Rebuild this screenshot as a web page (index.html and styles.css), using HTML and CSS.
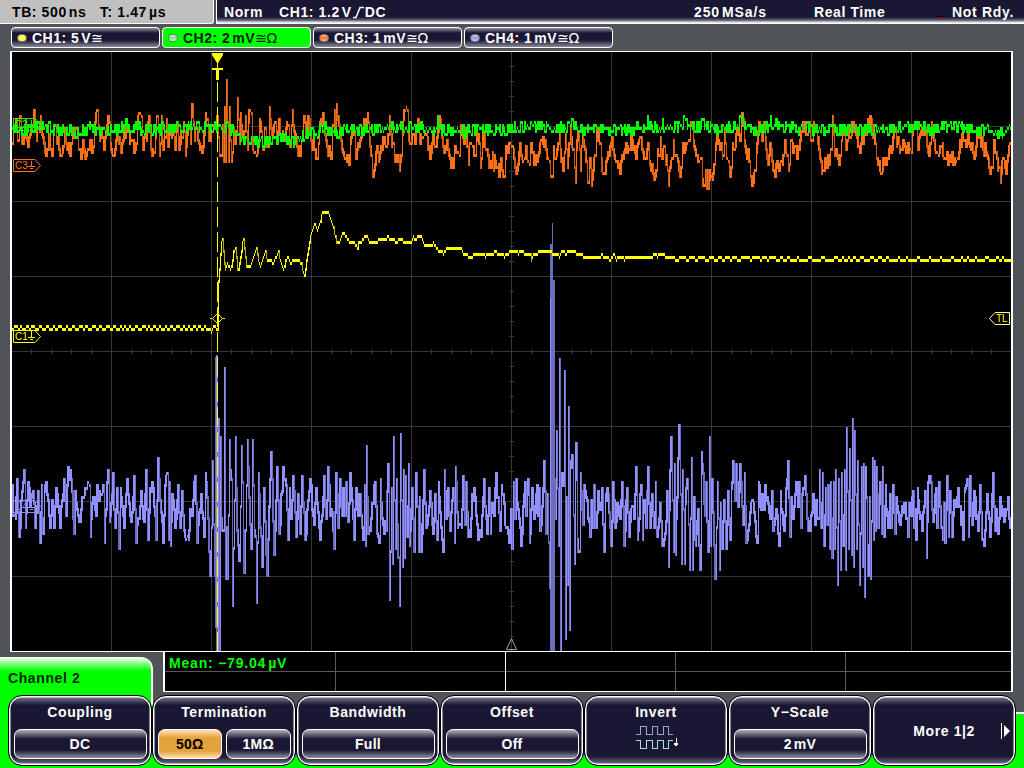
FILE: index.html
```html
<!DOCTYPE html>
<html lang="en">
<head>
  <meta charset="UTF-8" />
  <title>Oscilloscope</title>
  <link rel="stylesheet" href="styles.css">
</head>
<body>

  <div class="screen">
    <header class="topbar">
      <div class="timebase"><span class="tb">TB: 500<i></i>ns</span><span>T: 1.47<i></i>µs</span></div>
      <div class="status">
        <span class="mode">Norm</span>
        <span class="trig">CH1: 1.2<i></i>V<svg class="edge" width="13" height="13" viewBox="0 0 13 13"><path d="M1 11.5H4L8 1.5H12" /></svg>DC</span>
        <span class="rate">250<i></i>MSa/s</span>
        <span class="acq">Real Time</span>
        <span class="lamp"></span>
        <span class="ready">Not Rdy.</span>
      </div>
    </header>

    <nav class="channels">
      <div class="channel"><b class="led yellow"></b>CH1: 5<i></i>V<em>≅</em></div>
      <div class="channel active"><b class="led green"></b>CH2: 2<i></i>mV<em>≅Ω</em></div>
      <div class="channel"><b class="led orange"></b>CH3: 1<i></i>mV<em>≅Ω</em></div>
      <div class="channel"><b class="led violet"></b>CH4: 1<i></i>mV<em>≅Ω</em></div>
    </nav>

    <main class="plot">
      <svg width="999" height="599" viewBox="12 52 999 599">
        <path id="grid" class="grid" />
        <path id="ch3dim" class="trace c3 dim" /><path id="ch3" class="trace c3" />
        <path id="ch4dim" class="trace c4 dim" /><path id="ch4" class="trace c4" />
        <path id="ch2" class="trace c2" />
        <path id="ch1dim" class="trace c1 dim" /><path id="ch1" class="trace c1" />

        <g class="tag c2"><path d="M13.5 118.5H35L40.5 124.5L35 130.5H13.5Z" /><text x="15" y="128">C2</text><path d="M31.5 120V127M28 127.5H35M30 129.5H33" /></g>
        <g class="tag c3"><path d="M13.5 159.5H35L40.5 165.5L35 171.5H13.5Z" /><text x="15" y="169">C3</text><path d="M31.5 161V166M28 166.5H35M30 168.5H33" /></g>
        <g class="tag c1"><path d="M13.5 330.5H35L40.5 336.5L35 342.5H13.5Z" /><text x="15" y="340">C1</text><path d="M31.5 330V337M28 337.5H35M30 339.5H33" /></g>
        <g class="tag c4"><path d="M13.5 500.5H35L40.5 506.5L35 512.5H13.5Z" /><text x="15" y="510">C4</text><path d="M31.5 502V507M28 507.5H35M30 509.5H33" /></g>
        <g class="tag level"><path d="M1009.5 312.5H995L989.5 318.5L995 324.5H1009.5Z" /><text x="996" y="322">TL</text></g>

        <path class="cursor" d="M217.5 82V651" />
        <path class="trigger" d="M212 53H223V55L218 63V68H223V70H219V80H216V70H212V68H217V63L212 55Z" />
        <path class="diamond" d="M210 318.5H212.5L217.5 313.5L222.5 318.5H225M212.5 318.5L217.5 323.5L222.5 318.5" />
        <path class="ref" d="M511.5 638.5L506.5 649.5H516.5Z" />
      </svg>
    </main>

    <section class="lower">
      <div class="tab">Channel 2</div>
      <div class="readout">
        <div class="cell value">Mean: −79.04<i></i>µV</div><div class="cell mid"></div><div class="cell"></div><div class="cell"></div><div class="cell"></div>
        <div class="cell"></div><div class="cell mid"></div><div class="cell"></div><div class="cell"></div><div class="cell"></div>
      </div>
    </section>

    <footer class="keys">
      <div class="key"><span>Coupling</span><div class="opts"><button>DC</button></div></div>
      <div class="key"><span>Termination</span><div class="opts"><button class="on">50Ω</button><button>1MΩ</button></div></div>
      <div class="key"><span>Bandwidth</span><div class="opts"><button>Full</button></div></div>
      <div class="key"><span>Offset</span><div class="opts"><button>Off</button></div></div>
      <div class="key"><span>Invert</span>
        <svg class="invert" width="48" height="26" viewBox="0 0 48 26">
          <path class="wave" d="M0 9.5H5.5V.5H11.5V9.5H17.5V.5H23.5V9.5H29.5V.5H35.5V9.5H40" />
          <path class="wave inv" d="M0 15.5H5.5V24.5H11.5V15.5H17.5V24.5H23.5V15.5H29.5V24.5H35.5V15.5H40" />
          <path class="down" d="M43.5 13V21" /><path class="head" d="M40.5 18.5H46.5L43.5 22Z" />
        </svg>
      </div>
      <div class="key"><span>Y−Scale</span><div class="opts"><button>2<i></i>mV</button></div></div>
      <div class="key more"><span>More 1|2</span><svg width="10" height="16" viewBox="0 0 10 16"><path d="M0 0H1V16H0ZM3 2L9 8L3 14Z" /></svg></div>
    </footer>
  </div>

  <script src="scope.js"></script>
</body>
</html>
```

FILE: styles.css
```css
body {
  margin: 0;
  background: #505458;
  font: bold 14px "Liberation Sans", Arial, sans-serif;
  letter-spacing: 0.6px;
  color: #fff;
}
i {
  display: inline-block;
  width: 2px;
}
.screen {
  width: 1024px;
  height: 768px;
  overflow: hidden;
  display: flex;
  flex-direction: column;
}

/* top bar */
.topbar {
  display: flex;
  gap: 2px;
  height: 24px;
  line-height: 24px;
  white-space: pre;
}
.timebase {
  box-sizing: border-box;
  width: 214px;
  padding-left: 12px;
  color: #000;
  background: #c0c0c0;
  border-right: 1px solid #fff;
  border-bottom: 1px solid #fff;
  border-bottom-right-radius: 3px;
}
.timebase .tb {
  display: inline-block;
  width: 88px;
}
.status {
  box-sizing: border-box;
  flex: 1;
  display: flex;
  padding-left: 7px;
  background: linear-gradient(#1a1733 17px, #5c5a70 20px, #fff 23px);
  border-left: 1px solid #fff;
  border-bottom: 1px solid #fff;
}
.status span { flex-shrink: 0; }
.mode { width: 55px; }
.trig { width: 415px; }
.rate { width: 120px; letter-spacing: 0.9px; }
.acq { width: 123px; }
.edge {
  vertical-align: -2px;
  fill: none;
  stroke: #fff;
  stroke-width: 1.5;
}
.lamp {
  width: 8px;
  height: 1px;
  margin: 16px 7px 0 0;
  background: #b00000;
  border-top: 1px solid #000;
}
.ready { letter-spacing: 0.7px; }

/* channel buttons */
.channels {
  display: flex;
  gap: 2px;
  padding: 3px 0 3px 11px;
}
.channel {
  box-sizing: border-box;
  width: 149px;
  height: 21px;
  padding-left: 5px;
  display: flex;
  align-items: center;
  border: 1px solid #fff;
  border-radius: 4px;
  background: linear-gradient(#9090a0, #1a1733 5px, #1a1733 12px, #8a8a9a);
  letter-spacing: 0.5px;
}
.channel.active {
  color: #002000;
  background: #00ff00;
}
.channel em {
  font: 14px "DejaVu Sans", sans-serif;
  letter-spacing: -0.5px;
}
.led {
  width: 8px;
  height: 6px;
  border: 1px solid #777;
  border-radius: 4px;
  margin-right: 5px;
}
.led.yellow { background: linear-gradient(#ffffa0, #ffff00, #ffffa0); }
.led.green { background: linear-gradient(#d0ffd0, #80e080, #d0ffd0); }
.led.orange { background: linear-gradient(#ffc090, #ff7018, #ffc090); }
.led.violet { background: linear-gradient(#d0d0ff, #9090ff, #d0d0ff); }

/* waveform area */
.plot {
  width: 999px;
  height: 599px;
  margin-left: 10px;
  background: #000;
  border: solid #fff;
  border-width: 1px 2px;
}
.plot svg { display: block; }
.grid {
  stroke: #383838;
  fill: none;
  shape-rendering: crispEdges;
}
.trace {
  fill: none;
  stroke-width: 1;
  shape-rendering: crispEdges;
}
.c1 { stroke: #ffff00; }
.c2 { stroke: #00ff00; }
.c3 { stroke: #ff7018; }
.c4 { stroke: #9090ff; }
.c1.dim { stroke: #b4b400; }
.c3.dim { stroke: #c45a18; }
.c4.dim { stroke: #6c6cbc; }
.tag { fill: none; }
.tag text {
  font: 10px "Liberation Sans", Arial, sans-serif;
  letter-spacing: 0;
  stroke: none;
}
.c1 text, .level text { fill: #ffff00; }
.c2 text { fill: #00ff00; }
.c3 text { fill: #ff7018; }
.c4 text { fill: #9090ff; }
.level { stroke: #ffff90; }
.cursor {
  stroke: #ffff00;
  stroke-dasharray: 20 5;
  shape-rendering: crispEdges;
}
.trigger { fill: #ffff00; }
.diamond { fill: none; stroke: #ffff00; }
.ref { fill: none; stroke: #a0a0a0; }

/* measurement row */
.lower {
  display: flex;
  justify-content: space-between;
  height: 40px;
}
.tab {
  box-sizing: border-box;
  width: 153px;
  height: 35px;
  margin-top: 5px;
  padding: 13px 0 0 8px;
  color: #002800;
  background: linear-gradient(#fff, #00ff00 14px);
  border-right: 2px solid #fff;
  border-top-right-radius: 12px;
}
.readout {
  display: grid;
  grid-template-columns: 171px repeat(3, 170px) 165px;
  grid-template-rows: 20px 19px;
  margin-right: 11px;
  background: #000;
  border: solid #fff;
  border-width: 0 2px 1px 2px;
}
.cell {
  box-sizing: border-box;
  border-right: 1px solid #585858;
  border-bottom: 1px solid #585858;
}
.cell.mid { border-right-color: #fff; }
.cell:nth-child(5n) { border-right: 0; }
.cell:nth-child(n+6) { border-bottom: 0; }
.value {
  padding-left: 4px;
  line-height: 22px;
  color: #00ff00;
  white-space: nowrap;
  letter-spacing: 0.8px;
}

/* soft keys */
.keys {
  display: flex;
  height: 73px;
  padding: 3px 0 0 8px;
  background:
    linear-gradient(#fff, #fff) 151px 0 / 2px 13px no-repeat,
    linear-gradient(#00ff00, #00ff00) 0 0 / 153px 76px no-repeat,
    linear-gradient(#fff 2px, #00ff00 2px) 1015px 20px / 9px 56px no-repeat,
    linear-gradient(#00ff00, #00ff00) 0 63px / 1024px 13px no-repeat;
}
.key {
  box-sizing: border-box;
  width: 144px;
  height: 71px;
  padding: 2px 4px 6px;
  display: flex;
  flex-direction: column;
  align-items: center;
  justify-content: space-between;
  border: 1px solid #000;
  border-radius: 14px;
  background: linear-gradient(#85859a, #1a1733 9px, #1a1733 60px, #77778a);
  box-shadow: inset 0 0 0 1.5px #fff;
}
.key span { line-height: 28px; }
.opts {
  display: flex;
  gap: 4px;
  width: 133px;
}
.opts button {
  flex: 1;
  height: 30px;
  padding: 0;
  border: 1.5px solid #fff;
  border-radius: 7px;
  background: linear-gradient(#b0b0bc, #1a1733 9px, #1a1733 20px, #9090a0);
  font: inherit;
  letter-spacing: 0.3px;
  color: #fff;
}
.opts button.on {
  color: #000;
  background: linear-gradient(#ffe0b0, #e4a23c 8px, #e4a23c 21px, #ffe0b0);
}
.invert {
  margin: 0 0 9px 3px;
  fill: none;
}
.invert path { shape-rendering: crispEdges; }
.wave { stroke: #a0b4dc; }
.wave.inv { stroke: #b4f0f0; }
.down { stroke: #fff; }
.head { fill: #fff; }
.key.more {
  flex-direction: row;
  justify-content: flex-end;
  padding: 2px 4px 2px 0;
}
.key.more svg {
  margin-left: 26px;
  fill: #fff;
}
```

FILE: scope.js
```js
const LEFT = 12, RIGHT = 1011;

// small seeded generator so the noise is the same on every load
let seed = 7;
function rnd() {
  seed = (seed * 16807) % 2147483647;
  return seed / 2147483647;
}

// "x,y x,y ..." -> one y for every pixel column
function sample(text, noise) {
  const pts = text.trim().split(/\s+/).map(p => p.split(',').map(Number));
  const out = [];
  let k = 0;
  for (let x = LEFT; x < RIGHT; x++) {
    while (k < pts.length - 2 && pts[k + 1][0] <= x) k++;
    const [x0, y0] = pts[k], [x1, y1] = pts[k + 1];
    const t = Math.min(1, Math.max(0, (x - x0) / (x1 - x0)));
    let y = y0 + (y1 - y0) * t;
    if (x !== x0) y += (rnd() - 0.5) * noise;
    out.push(Math.round(y / 3) * 3);
  }
  return out;
}

// join the columns with vertical strokes at least 3px tall,
// a wide trace also reaches for its next column on short swings
function draw(id, ys, limit, wide) {
  let bright = '', dim = '';
  const dimPath = document.getElementById(id + 'dim');
  ys.forEach((y, i) => {
    const prev = i ? ys[i - 1] : y;
    const next = i < ys.length - 1 ? ys[i + 1] : y;
    let a = Math.min(prev, y), b = Math.max(prev, y);
    if (Math.abs(next - y) < wide) {
      a = Math.min(a, next);
      b = Math.max(b, next);
    }
    if (b > a && b - a < 6) a = b = y;
    const seg = `M${LEFT + i + 0.5} ${a - 2}V${b + 1}`;
    if (dimPath && b - a > limit && y > prev) dim += seg;
    else bright += seg;
  });
  document.getElementById(id).setAttribute('d', bright);
  if (dimPath) dimPath.setAttribute('d', dim);
}

function drawGrid() {
  let d = '';
  for (let x = 111; x < 1000; x += 100) d += `M${x + 0.5} 52V651`;
  for (let y = 126; y < 600; y += 75) d += `M12 ${y + 0.5}H1011`;
  for (let x = 31; x < 1000; x += 20) d += `M${x + 0.5} 349V354`;
  for (let y = 66; y < 650; y += 15) d += `M509 ${y + 0.5}H514`;
  document.getElementById('grid').setAttribute('d', d);
}

const ch1 = `211,332 213,327 216,329 217,329 218,282 219,270 221,242 222,241 224,265 225,270 227,264 230,270 232,262
233,253 235,248 237,270 238,270 240,258 242,243 243,241 244,250 246,266 250,267 252,262 256,250 258,262 260,267 263,259
265,253 267,261 273,263 278,253 280,260 283,270 285,262 287,257 290,264 293,260 298,260 301,265 304,276 306,262
309,243 311,233 314,224 317,231 319,226 322,213 328,213 330,219 333,229 336,242 339,242 343,233 346,237 349,243
354,243 357,249 358,243 361,242 364,237 367,237 369,243 377,243 379,239 386,239 387,236 389,239 394,240 396,243
398,240 401,239 404,243 411,243 413,238 416,240 418,236 420,236 424,245 432,245 433,242 436,250 441,252 443,254
446,250 449,248 461,248 463,254 468,257 472,257 474,254 484,254 485,257 487,254 493,254 495,251 497,254 502,254
504,257 507,254 513,251 518,254 521,251 524,254 530,255 531,261 533,255 537,254 540,251 550,251 552,254 557,255
559,257 561,251 565,254 573,251 576,254 581,255 583,257 600,257 601,254 603,257 610,260 614,254 616,260 620,257
624,260 626,257 652,257 654,254 657,257 661,254 666,258`;

// level parts of channel 1 toggle between two codes
let before = '', after = '';
for (let x = LEFT, up = 0; x < 210; up = !up) {
  const w = 2 + Math.floor(rnd() * 3);
  before += `${x},${up ? 327 : 330} ${x + w - 0.1},${up ? 327 : 330} `;
  x += w;
}
for (let x = 669, up = 0; x < RIGHT; up = !up) {
  const w = up ? 2 + Math.floor(rnd() * 3) : 3 + Math.floor(rnd() * 7);
  const y = up ? (x < 770 ? 261 : 258) : (x < 770 ? 258 : 260);
  after += ` ${x},${y} ${x + w - 0.1},${y}`;
  x += w;
}

const ch2 = `12,128 20,130 40,128 60,130 78,134 90,128 105,132 125,127 126,119 127,128 140,129 170,130 200,128 225,128 236,131 243,139
250,144 260,141 268,143 280,139 290,143 300,138 308,131 316,134 322,128 334,135 345,130 370,129 400,128 430,129
436,129 437,116 438,129 470,132 480,129 500,131 530,126 550,129 570,126 585,130 610,130 640,129 646,128 647,118 649,128
661,128 662,119 663,128 680,126 686,119 688,127 700,128 702,119 704,128 725,129 738,128 739,119 742,118 745,129 768,129
770,118 772,129 776,120 778,128 800,130 825,129 850,131 880,130
910,127 940,129 960,127 980,132 1000,134 1011,129`;

const ch3 = `12,144 14,128 16,120 18,140 20,118 22,145 25,120 28,146 30,135 34,112 36,142 40,118 42,135 44,145 46,157
48,136 52,157 54,126 58,138 60,157 61,157 64,130 66,145 70,157 72,128 76,130 78,146 81,160 83,142 85,160 87,152 91,140
92,152 95,122 97,112 99,140 101,128 104,149 108,118 110,144 115,150 117,128 120,154 124,130 128,133 130,145 135,151
137,122 141,118 143,150 147,128 149,118 151,150 154,152 157,117 159,157 161,118 163,150 166,121 168,148 171,130
175,150 177,122 179,150 183,122 185,157 188,130 190,145 192,106 194,140 197,130 202,154 205,115 207,120 209,142
213,130 217,118 219,152 221,157 222,125 223,162 224,108 225,162 226,82 228,162 229,109 231,163 233,128 235,145
237,100 239,145 240,115 242,138 245,116 247,150 249,112 251,114 253,150 258,147 259,120 263,150 265,130 268,148
269,109 272,135 275,122 277,140 279,121 281,135 285,140 287,122 290,148 292,112 295,135 300,157 303,121 306,135
309,120 311,140 314,150 316,160 319,130 324,122 327,148 331,160 332,130 334,112 335,135 336,106 338,117 341,140
344,156 346,156 349,165 351,138 353,130 356,160 360,140 362,130 365,120 368,122 370,148 373,178 376,152 379,158
381,148 384,137 387,143 389,118 391,135 395,162 397,162 400,162 402,135 405,110 407,112 409,140 412,135 415,144
418,120 420,145 424,135 428,150 430,160 433,135 436,146 439,118 441,128 443,147 447,140 449,155 453,168 455,146
459,155 460,125 464,143 465,130 468,165 470,144 475,155 478,135 480,168 482,136 486,150 490,163 495,162 499,177
501,160 504,177 506,148 510,145 514,158 517,171 520,145 524,160 526,148 529,165 531,145 535,165 540,145 543,137
547,160 550,177 552,177 553,148 555,160 559,130 560,150 563,170 565,135 567,168 569,145 570,130 573,150 575,183 576,150
578,133 580,170 582,130 585,150 587,183 588,183 590,160 591,186 594,160 597,130 600,145 602,172 605,174 609,155
612,137 615,160 620,174 625,150 630,150 632,140 636,160 640,138 645,160 648,145 650,165 655,178 657,150 659,155
660,137 662,158 664,148 667,172 668,186 671,163 673,142 677,160 680,177 682,150 686,145 688,140 691,124 693,140
697,157 700,158 703,185 705,172 706,189 707,172 708,189 709,172 711,178 713,174 717,133 720,150 723,155 724,130
727,160 730,178 732,145 735,148 737,130 740,140 742,113 744,140 749,162 750,177 752,186 755,170 757,145 760,125
762,140 764,122 766,150 768,165 770,145 774,172 777,162 782,165 784,140 788,171 790,145 794,150 797,158 800,140
803,124 806,135 809,122 810,140 814,128 818,138 820,160 822,174 825,160 829,165 831,150 832,118 834,150 839,165
842,125 845,150 848,125 850,138 853,122 856,135 860,153 862,135 866,135 869,122 872,125 875,145 878,165 881,174
885,160 888,158 892,150 894,130 897,145 900,148 903,140 907,148 911,153 914,125 918,150 922,130 926,135 929,156
931,124 935,150 938,155 942,145 945,158 950,155 955,160 958,158 960,140 965,144 968,135 971,150 974,160 977,137
980,135 983,150 985,145 988,160 991,170 994,142 997,160 1000,183 1003,160 1006,175 1009,148 1011,155`;

const ch4 = `12,487 13,516 15,520 17,481 19,537 22,493 24,472 25,528 28,484 30,508 33,493 35,528 38,493 40,543 41,487
43,534 44,487 46,484 50,528 52,500 54,528 56,490 60,528 64,481 66,516 68,469 71,481 74,534 75,493 79,522 81,510
84,496 87,487 89,487 90,537 93,499 96,516 97,487 99,502 103,487 104,543 107,484 108,472 109,522 111,505 113,475
115,528 117,490 119,549 120,490 124,528 127,481 131,522 134,478 136,543 141,493 144,522 146,472 148,540 150,490
153,490 156,540 158,460 160,500 163,543 165,487 167,475 168,540 169,484 170,546 172,495 175,528 178,487 180,528
182,493 184,532 188,540 190,510 192,515 195,478 197,543 201,496 204,537 205,475 208,519 210,576 212,463 214,576
215,628 216,357 217,651 218,420 219,651 220,439 221,520 222,530 223,530 224,370 225,579 226,528 227,579 229,442 230,470
231,480 232,606 233,550 235,439 237,530 239,562 241,448 244,574 247,442 251,550 252,442 254,532 255,537 256,604 258,475
262,567 264,490 267,576 271,454 274,556 277,469 279,535 283,469 286,487 288,540 289,490 291,520 293,478 296,537
298,495 300,535 302,478 305,540 308,500 310,481 314,526 316,490 320,540 324,478 326,520 328,469 330,515 332,514
334,549 336,475 338,528 340,481 342,517 343,490 345,516 346,484 348,522 350,475 354,541 356,490 358,516 360,496
363,541 364,487 365,547 366,448 368,535 370,532 372,505 375,484 377,534 379,544 380,481 382,520 386,531 388,466
389,601 391,490 392,565 393,439 395,550 396,480 399,607 400,436 402,568 403,472 404,558 405,478 407,537 408,466
409,547 412,490 414,553 416,475 418,553 419,499 421,553 424,472 426,528 430,493 433,535 435,496 437,540 438,484
443,553 444,472 446,520 448,490 450,532 453,490 454,544 455,469 458,528 461,529 463,478 465,525 466,484 468,537
470,538 472,496 475,499 478,541 481,538 484,481 487,535 489,490 490,535 492,505 494,515 496,475 500,532 501,487
503,496 506,528 509,543 511,510 512,550 513,484 515,520 516,481 518,510 521,547 523,508 525,484 526,516 528,481
529,544 532,490 534,520 537,487 538,515 539,490 540,532 542,508 544,463 546,535 547,496 549,589 550,300 555,520
556,433 558,547 559,361 560,651 561,478 563,485 564,373 564.5,373 565,640 566,499 567,586 568,409 569,631 570,463 572,457 574,565
575,481 576,445 577,540 579,553 580,475 583,526 584,487 587,500 590,538 591,500 593,528 594,487 596,529 598,493
600,510 602,490 604,553 605,495 608,496 611,547 613,484 615,529 617,505 620,520 622,484 624,547 627,490 629,538
632,508 634,520 636,469 637,541 641,487 642,541 644,500 646,528 648,469 650,529 652,495 654,529 655,484 656,538
660,505 662,547 665,535 667,493 668,568 669,510 671,439 673,553 674,466 675,556 679,427 681,565 682,472 684,565
685,505 687,481 689,571 691,460 692,571 694,497 695,547 698,510 700,571 701,454 703,475 705,517 706,484 708,553
709,439 710,547 712,481 715,580 717,484 719,571 720,505 722,550 724,500 726,550 728,493 730,541 731,490 733,463
735,500 736,466 738,508 740,466 743,526 744,475 746,544 749,526 752,500 754,512 757,544 758,484 761,511 762,496
764,510 765,487 768,505 770,520 772,493 773,532 776,511 779,547 780,493 784,532 788,463 790,537 791,497 793,520
796,484 798,506 799,484 801,528 802,495 805,478 807,520 810,532 813,496 815,526 816,500 818,520 819,472 821,528
822,475 824,547 825,490 827,526 828,487 829,550 830,484 832,559 833,484 834,550 835,472 837,586 838,480 840,571
841,475 843,547 844,472 845,571 846,430 848,550 849,451 851,556 852,421 853,568 854,433 856,550 857,463 859,586
861,469 862,568 863,466 864,598 865,469 868,577 868.5,451 870,580 872,460 873,540 874,463 875,532 876,469 878,529
880,484 881,535 882,469 884,538 885,487 888,529 890,496 891,528 893,487 895,535 896,499 899,522 902,508 904,505
907,518 908,538 909,505 911,517 913,493 914,529 915,510 916,541 917,490 922,532 925,493 926,559 928,484 931,484
933,522 936,490 937,529 939,484 941,528 943,541 944,505 945,543 947,478 948,538 950,493 952,538 954,500 956,508
958,490 961,525 961.5,490 963,541 964,493 967,481 968,538 970,478 972,526 974,493 978,532 980,487 982,540 984,547
987,496 990,538 993,475 995,532 996,510 998,535 1000,499 1004,522 1006,510 1008,499 1010,532`;

drawGrid();
draw('ch3', sample(ch3, 17), 14, 14);
draw('ch4', sample(ch4, 16), 30, 45);
draw('ch2', sample(ch2, 11), 99, 9);
draw('ch1', sample(before + ch1 + after, 0), 5, 0);

// the two saturated bursts
document.getElementById('ch4dim').setAttribute('d', document.getElementById('ch4dim').getAttribute('d') +
  'M215.5 357V628M216.5 357V651M550.5 244V651M551.5 244V651M552.5 223V651M553.5 280V651M554.5 280V651');
```
